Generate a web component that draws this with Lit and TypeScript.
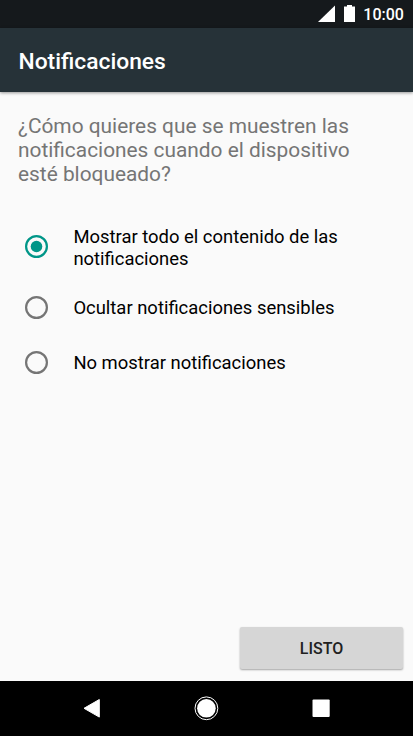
import { LitElement, html, css, svg } from "lit";
import { customElement } from "lit/decorators.js";

@customElement("app-root")
class AppRoot extends LitElement {
  static styles = css`
    :host { display: flex; flex-direction: column; width: 413px; height: 736px; overflow: hidden; background: #fafafa; font-family: Roboto, sans-serif; color: #000; }
    svg { display: block; }
    .status { height: 28px; flex: none; background: #15191c; color: #fff; }
    .status svg { width: 413px; height: 28px; }
    .time { font-size: 16px; font-weight: 500; }
    .bar { height: 64px; flex: none; background: #263238; color: #fff; display: flex; align-items: center; padding: 2px 18.5px 0; box-sizing: border-box; font-size: 22.8px; font-weight: 500; box-shadow: 0 1px 3px rgba(0,0,0,.4); }
    main { flex: 1; display: flex; flex-direction: column; min-height: 0; }
    .question { margin: 22px 18px 0; font-size: 20.87px; line-height: 24px; color: #757575; white-space: nowrap; }
    .options { padding-top: 40px; }
    .option { display: flex; align-items: center; gap: 24.4px; padding-left: 24px; height: 55px; font-size: 18.43px; line-height: 22px; white-space: nowrap; }
    .option.tall { height: 44px; padding-bottom: 10px; }
    .option svg { width: 25px; height: 25px; }
    .option.tall svg { margin-bottom: 3px; }
    .actions { margin-top: auto; display: flex; justify-content: flex-end; padding: 0 10px 12px; }
    button { border: 0; padding: 0; width: 163px; height: 42px; border-radius: 2px; background: #d6d6d6; color: #212121; font: 500 16px Roboto, sans-serif; box-shadow: 0 1px 2px rgba(0,0,0,.35); }
    nav { height: 55px; flex: none; background: #000; }
  `;
  option(lines: string[], on = false) {
    return html`<div class="option ${lines.length > 1 ? "tall" : ""}">
      <svg viewBox="0 0 25 25"><circle cx="12.5" cy="12.5" r="10.4" fill="none" stroke=${on ? "#009688" : "#757575"} stroke-width="2.2"/>${on ? svg`<circle cx="12.5" cy="12.5" r="5.8" fill="#009688"/>` : ""}</svg>
      <div>${lines.map((l) => html`<div>${l}</div>`)}</div>
    </div>`;
  }
  render() {
    return html`
      <div class="status"><svg viewBox="0 0 413 28" fill="#fff"><path d="M335 5.500v16.500h-17z"/><path d="M347 5h5v1.500h3v15.500h-11V6.500h3z"/><text class="time" x="363.300" y="20">10:00</text></svg></div>
      <div class="bar">Notificaciones</div>
      <main>
        <div class="question">¿Cómo quieres que se muestren las<br>notificaciones cuando el dispositivo<br>esté bloqueado?</div>
        <div class="options">
          ${this.option(["Mostrar todo el contenido de las", "notificaciones"], true)}
          ${this.option(["Ocultar notificaciones sensibles"])}
          ${this.option(["No mostrar notificaciones"])}
        </div>
        <div class="actions"><button>LISTO</button></div>
      </main>
      <nav><svg width="413" height="55" fill="#fff"><path d="M84 27.300L99.300 18.500v17.600z" stroke="#fff" stroke-linejoin="round"/><circle cx="206.400" cy="27.300" r="9.300"/><circle cx="206.400" cy="27.300" r="11.400" fill="none" stroke="#fff"/><rect x="312.500" y="18.500" width="17.200" height="17.500" rx="1"/></svg></nav>`;
  }
}
